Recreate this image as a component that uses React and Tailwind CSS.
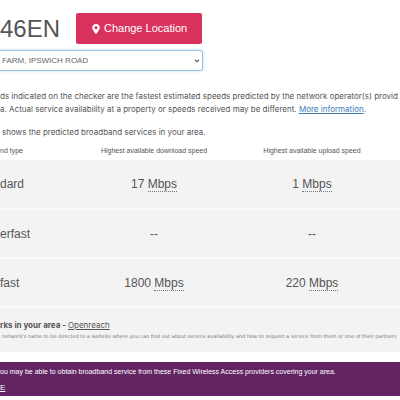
import { FaMapMarkerAlt } from 'react-icons/fa';

const SERVICES = [
  { type: 'dard', download: '17', upload: '1' },
  { type: 'erfast', download: null, upload: null },
  { type: 'fast', download: '1800', upload: '220' },
];

function Speed({ value }) {
  if (!value) return '--';
  return (
    <>
      {value}{' '}
      <abbr title="Megabits per second" className="border-b border-dotted border-[#777] no-underline">
        Mbps
      </abbr>
    </>
  );
}

function LocationBar() {
  return (
    <header className="pt-[13px]">
      <div className="flex items-center gap-[16px]">
        <h1 className="text-[24px] leading-[31px]">46EN</h1>
        <button
          type="button"
          className="flex h-[31px] w-[126px] items-center justify-center gap-[3px] rounded-xs bg-[#d9325e] text-[11px] text-white"
        >
          <FaMapMarkerAlt size={10} />
          Change Location
        </button>
      </div>
      <div className="relative mt-[6px] w-[203px]">
        <select
          aria-label="Address"
          className="block h-[21px] w-full appearance-none rounded-r-[3px] border border-l-0 border-[#9cc0dc] bg-white pl-[2px] text-[8px] text-[#666] shadow-[0_0_3px_#b5d6ee]"
        >
          <option>FARM, IPSWICH ROAD</option>
        </select>
        <svg viewBox="0 0 6 4" className="pointer-events-none absolute top-[9px] right-[3px] h-1 w-[6px]">
          <path d="M1 .7 3 2.7 5 .7" fill="none" stroke="#666" strokeWidth="1.3" />
        </svg>
      </div>
    </header>
  );
}

function ServiceTable() {
  return (
    <table className="mt-[2px] w-full table-fixed border-collapse text-center">
      <colgroup>
        <col className="w-[19%]" />
        <col className="w-[39%]" />
        <col className="w-[40%]" />
        <col />
      </colgroup>
      <thead>
        <tr className="h-[19px] text-[7px] leading-[8px]">
          <th scope="col" className="text-left font-normal">nd type</th>
          <th scope="col" className="font-normal">Highest available download speed</th>
          <th scope="col" className="font-normal">Highest available upload speed</th>
          <td />
        </tr>
      </thead>
      <tbody>
        {SERVICES.map((s) => (
          <tr key={s.type} className="h-[49px] border-b-2 border-[#fafafa] bg-[#f3f3f3] text-[12px] leading-[14px]">
            <th scope="row" className="text-left font-normal">{s.type}</th>
            <td><Speed value={s.download} /></td>
            <td><Speed value={s.upload} /></td>
            <td />
          </tr>
        ))}
      </tbody>
    </table>
  );
}

export default function App() {
  return (
    <div className="overflow-hidden bg-white font-['Liberation_Sans',Arial,sans-serif] whitespace-nowrap text-[#555]">
      <LocationBar />

      <main className="pt-[19px] font-[Inter,Arial,sans-serif]">
        <p className="text-[8px] leading-[13px]">
          ds indicated on the checker are the fastest estimated speeds predicted by the network operator(s) provid
          <br />
          a. Actual service availability at a property or speeds received may be different.{' '}
          <a href="#more" className="text-[#3b7cb5] underline">More information</a>.
        </p>
        <p className="mt-[10px] pl-[2px] text-[8px] leading-[13px]">
          shows the predicted broadband services in your area.
        </p>

        <div className="font-['Liberation_Sans',Arial,sans-serif]">
          <ServiceTable />
        </div>

        <section className="bg-[#f3f3f3] pt-[11px] pb-[11px]">
          <h2 className="text-[8px] leading-[12px] font-bold">
            rks in your area - <a href="#openreach" className="font-normal underline">Openreach</a>
          </h2>
          <p className="pl-[2px] font-['DejaVu_Sans',Verdana,sans-serif] text-[5px] leading-[10px] text-[#777]">
            network's name to be directed to a website where you can find out about service availability and how to request a service from them or one of their partners
          </p>
        </section>

        <section className="mt-[10px] bg-[#632463] pt-[5px] pb-[3px] font-['Liberation_Sans',Arial,sans-serif] text-white">
          <p className="text-[7px] leading-[10px]">
            ou may be able to obtain broadband service from these Fixed Wireless Access providers covering your area.
          </p>
          <a href="#provider" className="mt-[5px] block text-[8px] leading-[11px] underline">E</a>
        </section>
      </main>
    </div>
  );
}
